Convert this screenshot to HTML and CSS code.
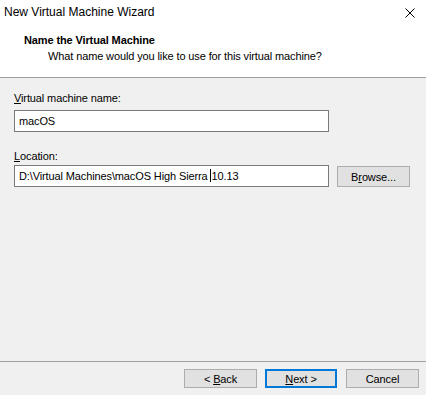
FILE: index.html
```html
<!DOCTYPE html>
<html lang="en">
<head>
  <meta charset="UTF-8">
  <title>New Virtual Machine Wizard</title>
  <link rel="stylesheet" href="styles.css">
</head>
<body>
  <div class="wizard">
    <!-- Window title bar -->
    <div class="titlebar">
      <span class="title">New Virtual Machine Wizard</span>
      <svg class="close" width="10" height="10" viewBox="0 0 10 10">
        <path d="M0.5 0.5 L9.5 9.5 M9.5 0.5 L0.5 9.5" stroke="#000" stroke-width="1" fill="none"/>
      </svg>
    </div>

    <!-- Page header -->
    <div class="header">
      <h1>Name the Virtual Machine</h1>
      <p>What name would you like to use for this virtual machine?</p>
    </div>
    <div class="separator"></div>

    <!-- Form fields -->
    <div class="content">
      <label class="field-label"><u>V</u>irtual machine name:</label>
      <div class="textbox name-box">macOS</div>

      <label class="field-label location-label"><u>L</u>ocation:</label>
      <div class="location-row">
        <div class="textbox location-box">D:\Virtual Machines\macOS High Sierra <span class="caret"></span>10.13</div>
        <button class="btn browse">B<u>r</u>owse...</button>
      </div>
    </div>

    <div class="separator"></div>
    <!-- Navigation buttons -->
    <div class="footer">
      <button class="btn">&lt; <u>B</u>ack</button>
      <button class="btn default"><u>N</u>ext &gt;</button>
      <button class="btn">Cancel</button>
    </div>
  </div>
</body>
</html>
```

FILE: styles.css
```css
/* Reset and base styles */
* {
  margin: 0;
  padding: 0;
  box-sizing: border-box;
}
html, body {
  width: 426px;
  height: 395px;
  overflow: hidden;
}
body {
  background: #f0f0f0;
  font-family: 'Liberation Sans', Arial, sans-serif;
  font-size: 11px;
  letter-spacing: -0.12px;
  color: #000;
}
.wizard {
  height: 395px;
  display: flex;
  flex-direction: column;
}
/* Title bar */
.titlebar {
  height: 28px;
  background: #fff;
  display: flex;
  justify-content: space-between;
  align-items: flex-start;
  padding: 4px 11px 0 4px;
}
.title {
  font-size: 12px;
  line-height: 16px;
  letter-spacing: 0;
}
.close {
  margin-top: 4px;
}
/* Header */
.header {
  background: #fff;
  height: 49px;
  padding: 6px 0 0 24px;
}
.header h1 {
  font-size: 11px;
  font-weight: bold;
  line-height: 13px;
}
.header p {
  line-height: 13px;
  margin-top: 3px;
  padding-left: 24px;
}
.separator {
  height: 1px;
  background: #a0a0a0;
}
/* Form */
.content {
  flex: 1;
  padding: 14px 16px 0 14px;
  display: flex;
  flex-direction: column;
}
.field-label {
  line-height: 13px;
  margin-bottom: 5px;
}
.location-label {
  margin-top: 18px;
  margin-bottom: 2px;
}
.textbox {
  background: #fff;
  border: 1px solid #7a7a7a;
  height: 22px;
  line-height: 20px;
  padding-left: 4px;
  white-space: nowrap;
}
.name-box {
  width: 315px;
}
.location-row {
  display: flex;
  align-items: flex-start;
  gap: 8px;
}
.location-box {
  width: 315px;
}
.caret {
  display: inline-block;
  width: 1px;
  height: 13px;
  background: #000;
  vertical-align: -2px;
}
/* Buttons */
.btn {
  font-family: inherit;
  font-size: 11px;
  letter-spacing: inherit;
  color: #000;
  background: #e1e1e1;
  border: 1px solid #adadad;
  width: 73px;
  height: 19px;
}
.browse {
  height: 21px;
  margin-top: 1px;
}
.default {
  border: 2px solid #0078d7;
  width: 72px;
}
.footer {
  height: 33px;
  display: flex;
  justify-content: flex-end;
  gap: 8px;
  padding: 7px 7px 0 0;
}
.footer .btn:last-child {
  margin-left: 1px;
}
```
